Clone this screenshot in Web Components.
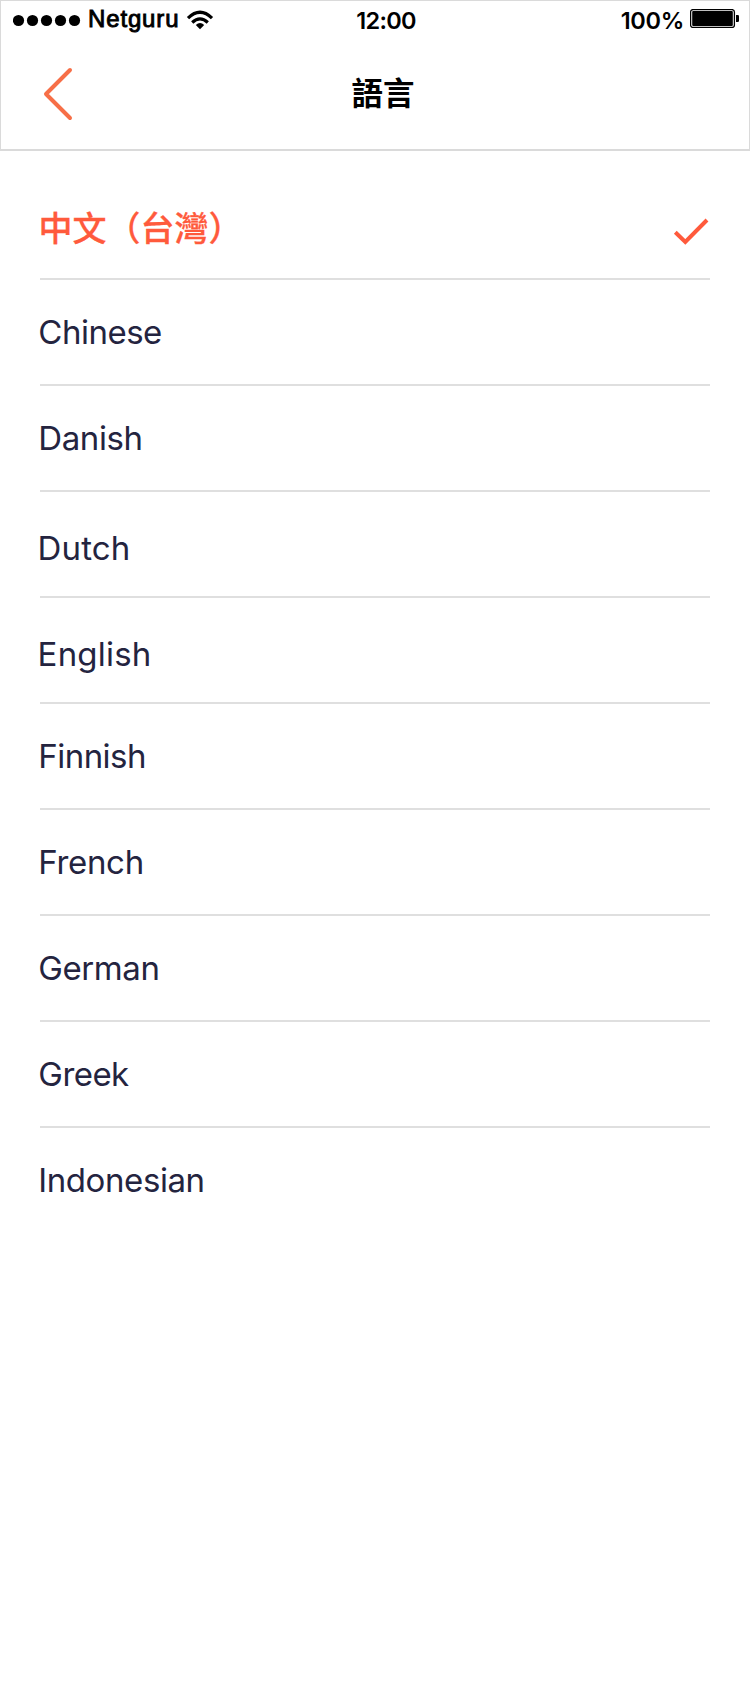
<!DOCTYPE html>
<html lang="zh-TW">
<head>
<meta charset="utf-8">
<title>語言</title>
<style>
  html, body { margin: 0; background: #fff; }
</style>
</head>
<body>
<language-screen></language-screen>
<script>
const define = (name, html) => customElements.define(name, class extends HTMLElement {
  constructor() {
    super();
    this.attachShadow({ mode: 'open' }).innerHTML = html;
  }
});

define('status-bar', `
  <style>
    :host { display: grid; grid-template-columns: 1fr auto 1fr; height: 40px; color: #000; }
    .left, .right { display: flex; align-items: flex-start; }
    .left { padding-left: 12px; }
    .right { justify-content: flex-end; padding-right: 10px; }
    svg { display: block; flex: none; }
    .carrier { font: 24px/28px "Liberation Sans", Arial, sans-serif; letter-spacing: .85px; -webkit-text-stroke: .9px #000; margin: 4px 0 0 5px; }
    .num { font: 600 23.5px/28px Inter, sans-serif; margin-top: 6px; white-space: nowrap; }
    .time { letter-spacing: -.75px; margin-left: 22px; }
    .pct { letter-spacing: -.3px; margin-right: 6px; }
    .wifi { margin: 9px 0 0 6.5px; }
    .battery { margin-top: 8px; }
  </style>
  <div class="left">
    <svg width="70" height="30" viewBox="0 0 70 30"><g fill="#000">
      <circle cx="5.5" cy="19.5" r="5.6"/><circle cx="19.5" cy="19.5" r="5.6"/><circle cx="33.5" cy="19.5" r="5.6"/><circle cx="47.5" cy="19.5" r="5.6"/><circle cx="61.5" cy="19.5" r="5.6"/></g></svg>
    <span class="carrier">Netguru</span>
    <svg class="wifi" width="28" height="22" viewBox="0 0 28 22">
      <g fill="none" stroke="#000" stroke-width="3.2"><path d="M2 8.1Q14 -3.7 26 8.1"/><path d="M6.2 12.5Q14 5.3 21.8 12.5"/></g>
      <path d="M14 19.2l-4.2-4.2q4.2-3.8 8.4 0z"/>
    </svg>
  </div>
  <span class="num time">12:00</span>
  <div class="right">
    <span class="num pct">100%</span>
    <svg class="battery" width="49" height="20" viewBox="0 0 49 20">
      <rect x=".6" y=".6" width="43.8" height="17.8" rx="2.5" fill="none" stroke="#000" stroke-width="1.3"/>
      <rect x="2.2" y="2.1" width="40.6" height="14.8" rx="1" fill="#000"/>
      <path d="M46 6h1.8q1.2 0 1.2 1.2v4.6q0 1.2-1.2 1.2H46z"/>
    </svg>
  </div>`);

define('nav-bar', `
  <style>
    :host { display: grid; grid-template-columns: 1fr auto 1fr; flex: 1; }
    svg { display: block; margin: 26px 0 0 41px; }
    .title { font: 700 31.5px/46px "Noto Sans CJK TC", sans-serif; color: #000; margin: 27px 0 0 16px; }
  </style>
  <svg width="32" height="56" viewBox="0 0 32 56"><path d="M28 3L4 27L28 51" fill="none" stroke="#f76f47" stroke-width="4" stroke-linecap="round" stroke-linejoin="round"/></svg>
  <span class="title"><slot></slot></span>`);

define('app-header', `
  <style>
    :host { display: flex; flex-direction: column; box-sizing: border-box; height: 151px;
      border: 1px solid #dadada; border-bottom-width: 2px; background: #fff; }
  </style>
  <slot></slot>`);

define('language-item', `
  <style>
    :host { display: flex; align-items: center; justify-content: space-between; box-sizing: border-box; height: 106px;
      border-bottom: 2px solid #dfdfdf; color: #24243f; font: 400 33px/50px Inter, sans-serif; }
    :host(:last-child) { border-bottom-color: transparent; }
    .label { display: block; margin-left: -1.7px; padding-top: var(--drop, 0); white-space: nowrap; }
    svg { display: none; margin-right: 1px; }
    :host([low]) { --drop: 8px; }
    :host([low]) .label { margin-left: -2.4px; }
    :host([selected]) { --drop: 2px; color: #ff5a3c; font: 500 34px/50px "Noto Sans CJK TC", sans-serif; }
    :host([selected]) .label { margin-left: -1.5px; -webkit-text-stroke: .3px #ff5a3c; }
    :host([selected]) svg { display: block; }
  </style>
  <span class="label"><slot></slot></span>
  <svg width="36" height="28" viewBox="0 0 36 28" transform="translate(0 5)"><path d="M2.3 15.3L12.3 25L34 3" fill="none" stroke="#ff5a3c" stroke-width="4"/></svg>`);

define('language-screen', `
  <style>
    :host { display: flex; flex-direction: column; width: 750px; height: 1700px; background: #fff; overflow: hidden; }
    main { display: flex; flex-direction: column; padding: 23px 40px 0; }
  </style>
  <app-header>
    <status-bar></status-bar>
    <nav-bar>語言</nav-bar>
  </app-header>
  <main>
    <language-item selected>中文<span>（</span>台灣<span>）</span></language-item>
    <language-item style="letter-spacing:-.5px">Chinese</language-item>
    <language-item style="letter-spacing:-.4px">Danish</language-item>
    <language-item low style="letter-spacing:.1px">Dutch</language-item>
    <language-item low style="letter-spacing:.2px">English</language-item>
    <language-item style="letter-spacing:-.55px">Finnish</language-item>
    <language-item style="letter-spacing:-.33px">French</language-item>
    <language-item style="letter-spacing:-.42px">German</language-item>
    <language-item style="letter-spacing:-.55px">Greek</language-item>
    <language-item style="letter-spacing:-.42px">Indonesian</language-item>
  </main>`);
</script>
</body>
</html>
